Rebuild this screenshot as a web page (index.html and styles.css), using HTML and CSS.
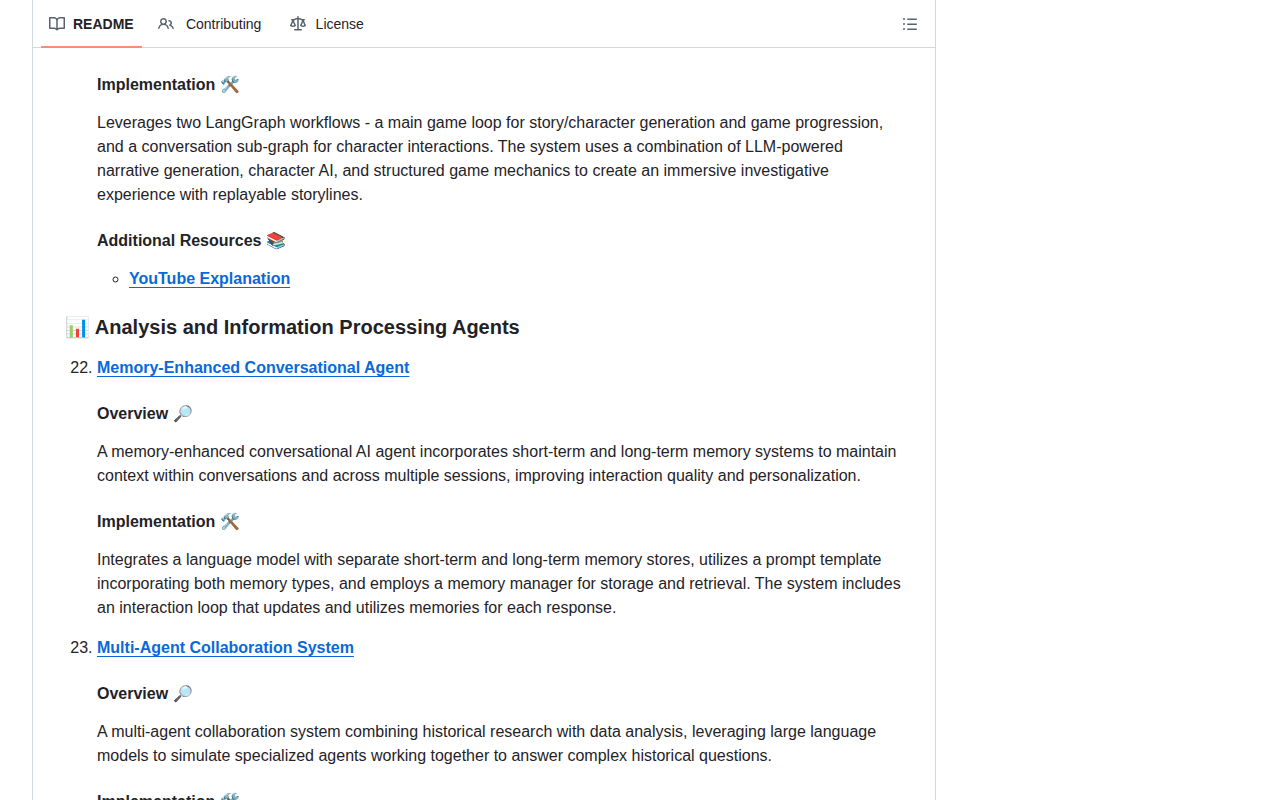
FILE: index.html
```html
<!DOCTYPE html>
<html lang="en">
<head>
    <meta charset="UTF-8">
    <meta name="viewport" content="width=device-width, initial-scale=1.0">
    <title>README</title>
    <link rel="stylesheet" href="styles.css">
</head>
<body>
    <div class="readme">
        <header class="readme-header">
            <nav class="tabs" aria-label="Repository files">
                <a class="tab selected" href="#readme" aria-current="page">
                    <svg class="icon" viewBox="0 0 16 16" aria-hidden="true"><path d="M0 1.75A.75.75 0 0 1 .75 1h4.253c1.227 0 2.317.59 3 1.501A3.743 3.743 0 0 1 11.006 1h4.245a.75.75 0 0 1 .75.75v10.5a.75.75 0 0 1-.75.75h-4.507a2.25 2.25 0 0 0-1.591.659l-.622.621a.75.75 0 0 1-1.06 0l-.622-.621A2.25 2.25 0 0 0 5.258 13H.75a.75.75 0 0 1-.75-.75Zm7.251 10.324.004-5.073-.002-2.253A2.25 2.25 0 0 0 5.003 2.5H1.5v9h3.757a3.75 3.75 0 0 1 1.994.574ZM8.755 4.75l-.004 7.322a3.752 3.752 0 0 1 1.992-.572H14.5v-9h-3.495a2.25 2.25 0 0 0-2.25 2.25Z"/></svg>
                    <span class="tab-text" data-content="README">README</span>
                </a>
                <a class="tab" href="#contributing">
                    <svg class="icon" viewBox="0 0 16 16" aria-hidden="true"><path d="M2 5.5a3.5 3.5 0 1 1 5.898 2.549 5.508 5.508 0 0 1 3.034 4.084.75.75 0 1 1-1.482.235 4 4 0 0 0-7.9 0 .75.75 0 0 1-1.482-.236A5.507 5.507 0 0 1 3.102 8.05 3.493 3.493 0 0 1 2 5.5ZM11 4a3.001 3.001 0 0 1 2.22 5.018 5.01 5.01 0 0 1 2.56 3.012.749.749 0 0 1-.885.954.752.752 0 0 1-.549-.514 3.507 3.507 0 0 0-2.522-2.372.75.75 0 0 1-.574-.73v-.352a.75.75 0 0 1 .416-.672A1.5 1.5 0 0 0 11 5.5.75.75 0 0 1 11 4Zm-5.5-.5a2 2 0 1 0-.001 3.999A2 2 0 0 0 5.5 3.5Z"/></svg>
                    <span class="tab-text" data-content="Contributing">Contributing</span>
                </a>
                <a class="tab" href="#license">
                    <svg class="icon" viewBox="0 0 16 16" aria-hidden="true"><path d="M8.75.75V2h.985c.304 0 .603.08.867.231l1.29.736c.038.022.08.033.124.033h2.234a.75.75 0 0 1 0 1.5h-.427l2.111 4.692a.75.75 0 0 1-.154.838l-.53-.53.529.531-.001.002-.002.002-.006.006-.006.005-.01.01-.045.04c-.21.176-.441.327-.686.45C14.556 10.78 13.88 11 13 11a4.498 4.498 0 0 1-2.023-.454 3.544 3.544 0 0 1-.686-.45l-.045-.04-.016-.015-.006-.006-.004-.004v-.001a.75.75 0 0 1-.154-.838L12.178 4.5h-.162c-.305 0-.604-.079-.868-.231l-1.29-.736a.245.245 0 0 0-.124-.033H8.75V13h2.5a.75.75 0 0 1 0 1.5h-6.5a.75.75 0 0 1 0-1.5h2.5V3.5h-.984a.245.245 0 0 0-.124.033l-1.289.737c-.265.15-.564.23-.869.23h-.162l2.112 4.692a.75.75 0 0 1-.154.838l-.53-.53.529.531-.001.002-.002.002-.006.006-.016.015-.045.04c-.21.176-.441.327-.686.45C4.556 10.78 3.88 11 3 11a4.498 4.498 0 0 1-2.023-.454 3.544 3.544 0 0 1-.686-.45l-.045-.04-.016-.015-.006-.006-.004-.004v-.001a.75.75 0 0 1-.154-.838L2.178 4.5H1.75a.75.75 0 0 1 0-1.5h2.234a.249.249 0 0 0 .125-.033l1.288-.737c.265-.15.564-.23.869-.23h.984V.75a.75.75 0 0 1 1.5 0Zm2.945 8.477c.285.135.718.273 1.305.273s1.02-.138 1.305-.273L13 6.327Zm-10 0c.285.135.718.273 1.305.273s1.02-.138 1.305-.273L3 6.327Z"/></svg>
                    <span class="tab-text" data-content="License">License</span>
                </a>
            </nav>
            <button class="outline-button" type="button" aria-label="Outline">
                <svg class="icon" viewBox="0 0 16 16" aria-hidden="true"><path d="M5.75 2.5h8.5a.75.75 0 0 1 0 1.5h-8.5a.75.75 0 0 1 0-1.5Zm0 5h8.5a.75.75 0 0 1 0 1.5h-8.5a.75.75 0 0 1 0-1.5Zm0 5h8.5a.75.75 0 0 1 0 1.5h-8.5a.75.75 0 0 1 0-1.5ZM2 14a1 1 0 1 1 0-2 1 1 0 0 1 0 2Zm1-6a1 1 0 1 1-2 0 1 1 0 0 1 2 0ZM2 4a1 1 0 1 1 0-2 1 1 0 0 1 0 2Z"/></svg>
            </button>
        </header>

        <article class="markdown">
            <div class="entry">
                <h4>Implementation 🛠️</h4>
                <p>Leverages two LangGraph workflows - a main game loop for story/character generation and game progression, and a conversation sub-graph for character interactions. The system uses a combination of LLM-powered narrative generation, character AI, and structured game mechanics to create an immersive investigative experience with replayable storylines.</p>
                <h4>Additional Resources 📚</h4>
                <ul>
                    <li><a href="#youtube">YouTube Explanation</a></li>
                </ul>
            </div>

            <h3>📊 Analysis and Information Processing Agents</h3>
            <ol start="22">
                <li>
                    <p><a href="#memory-agent">Memory-Enhanced Conversational Agent</a></p>
                    <h4>Overview 🔎</h4>
                    <p>A memory-enhanced conversational AI agent incorporates short-term and long-term memory systems to maintain context within conversations and across multiple sessions, improving interaction quality and personalization.</p>
                    <h4>Implementation 🛠️</h4>
                    <p>Integrates a language model with separate short-term and long-term memory stores, utilizes a prompt template incorporating both memory types, and employs a memory manager for storage and retrieval. The system includes an interaction loop that updates and utilizes memories for each response.</p>
                </li>
                <li>
                    <p><a href="#multi-agent">Multi-Agent Collaboration System</a></p>
                    <h4>Overview 🔎</h4>
                    <p>A multi-agent collaboration system combining historical research with data analysis, leveraging large language models to simulate specialized agents working together to answer complex historical questions.</p>
                    <h4>Implementation 🛠️</h4>
                </li>
            </ol>
        </article>
    </div>
</body>
</html>
```

FILE: styles.css
```css
* {
    box-sizing: border-box;
}

body {
    margin: 0;
    background-color: #fff;
    color: #1f2328;
    font-family: "Liberation Sans", Arial, sans-serif;
    font-size: 16px;
    line-height: 24px;
    height: 100vh;
    overflow: hidden;
}

.readme {
    min-height: 100vh;
    margin-left: 32px;
    margin-right: 344px;
    border-left: 1px solid #d1d9e0;
    border-right: 1px solid #d1d9e0;
}

.readme-header {
    display: flex;
    justify-content: space-between;
    align-items: center;
    height: 48px;
    padding: 0 8px;
    border-bottom: 1px solid #d1d9e0;
}

.tabs {
    display: flex;
    gap: 8px;
    align-self: stretch;
}

.tab {
    display: flex;
    align-items: center;
    gap: 8px;
    padding: 0 8px;
    color: #1f2328;
    font-size: 14px;
    text-decoration: none;
}

/* keeps the tab as wide as its bold label, so it doesn't jump when selected */
.tab-text::after {
    content: attr(data-content);
    display: block;
    height: 0;
    font-weight: 600;
    visibility: hidden;
}

.tab-text {
    text-align: center;
}

.selected {
    margin-bottom: -1px;
    padding-bottom: 1px;
    font-weight: 600;
    box-shadow: inset 0 -2px #fd8c73;
}

.icon {
    display: block;
    width: 16px;
    height: 16px;
    fill: #59636e;
}

.outline-button {
    padding: 8px;
    margin-right: 1px;
    border: 0;
    background: none;
    cursor: pointer;
}

.markdown {
    padding: 27px 32px 0;
}

.entry {
    padding-left: 32px;
}

h3 {
    margin: 24px 0 16px;
    font-size: 20px;
    line-height: 25px;
    font-weight: 600;
}

h4 {
    margin: 24px 0 16px;
    font-size: 16px;
    line-height: 20px;
    font-weight: 600;
}

.entry h4:first-child {
    margin-top: 0;
}

p {
    margin: 0 0 16px;
}

ul,
ol {
    margin: 0;
    padding-left: 32px;
}

ul {
    list-style-type: circle;
}

.markdown a {
    color: #0969da;
    font-weight: 600;
    text-underline-offset: 3px;
}
```
